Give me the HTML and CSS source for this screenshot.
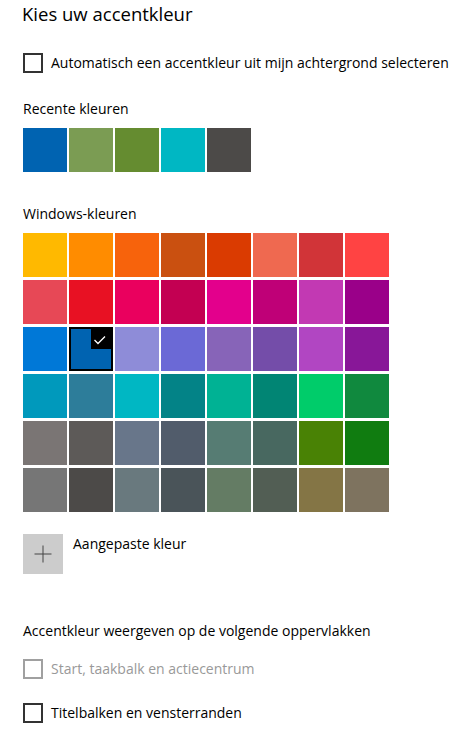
FILE: index.html
```html
<!DOCTYPE html>
<html lang="nl">
<head>
    <meta charset="UTF-8">
    <meta name="viewport" content="width=device-width, initial-scale=1.0">
    <title>Kies uw accentkleur</title>
    <link rel="stylesheet" href="styles.css">
</head>
<body>
    <h1 class="titel">Kies uw accentkleur</h1>

    <label class="vinkje vinkje-auto">
        <span class="vak"></span>
        <span>Automatisch een accentkleur uit mijn achtergrond selecteren</span>
    </label>

    <h2 class="kop kop-recent">Recente kleuren</h2>
    <div class="recent">
        <div class="kleur" style="background:#0063b1"></div>
        <div class="kleur" style="background:#7b9c53"></div>
        <div class="kleur" style="background:#658c30"></div>
        <div class="kleur" style="background:#00b7c3"></div>
        <div class="kleur" style="background:#4c4a48"></div>
    </div>

    <h2 class="kop kop-windows">Windows-kleuren</h2>
    <div class="raster">
        <!-- rij 1 -->
        <div class="kleur" style="background:#ffb900"></div>
        <div class="kleur" style="background:#ff8c00"></div>
        <div class="kleur" style="background:#f7630c"></div>
        <div class="kleur" style="background:#ca5010"></div>
        <div class="kleur" style="background:#da3b01"></div>
        <div class="kleur" style="background:#ef6950"></div>
        <div class="kleur" style="background:#d13438"></div>
        <div class="kleur" style="background:#ff4343"></div>
        <!-- rij 2 -->
        <div class="kleur" style="background:#e74856"></div>
        <div class="kleur" style="background:#e81123"></div>
        <div class="kleur" style="background:#ea005e"></div>
        <div class="kleur" style="background:#c30052"></div>
        <div class="kleur" style="background:#e3008c"></div>
        <div class="kleur" style="background:#bf0077"></div>
        <div class="kleur" style="background:#c239b3"></div>
        <div class="kleur" style="background:#9a0089"></div>
        <!-- rij 3 -->
        <div class="kleur" style="background:#0078d7"></div>
        <div class="kleur gekozen" style="background:#0063b1">
            <span class="hoek">
                <svg width="20" height="20" viewBox="0 0 20 20">
                    <path d="M3.5 11 L7 14.5 L14 7.5" fill="none" stroke="#fff" stroke-width="1.3"/>
                </svg>
            </span>
        </div>
        <div class="kleur" style="background:#8e8cd8"></div>
        <div class="kleur" style="background:#6b69d6"></div>
        <div class="kleur" style="background:#8764b8"></div>
        <div class="kleur" style="background:#744da9"></div>
        <div class="kleur" style="background:#b146c2"></div>
        <div class="kleur" style="background:#881798"></div>
        <!-- rij 4 -->
        <div class="kleur" style="background:#0099bc"></div>
        <div class="kleur" style="background:#2d7d9a"></div>
        <div class="kleur" style="background:#00b7c3"></div>
        <div class="kleur" style="background:#038387"></div>
        <div class="kleur" style="background:#00b294"></div>
        <div class="kleur" style="background:#018574"></div>
        <div class="kleur" style="background:#00cc6a"></div>
        <div class="kleur" style="background:#10893e"></div>
        <!-- rij 5 -->
        <div class="kleur" style="background:#7a7574"></div>
        <div class="kleur" style="background:#5d5a58"></div>
        <div class="kleur" style="background:#68768a"></div>
        <div class="kleur" style="background:#515c6b"></div>
        <div class="kleur" style="background:#567c73"></div>
        <div class="kleur" style="background:#486860"></div>
        <div class="kleur" style="background:#498205"></div>
        <div class="kleur" style="background:#107c10"></div>
        <!-- rij 6 -->
        <div class="kleur" style="background:#767676"></div>
        <div class="kleur" style="background:#4c4a48"></div>
        <div class="kleur" style="background:#69797e"></div>
        <div class="kleur" style="background:#4a5459"></div>
        <div class="kleur" style="background:#647c64"></div>
        <div class="kleur" style="background:#525e54"></div>
        <div class="kleur" style="background:#847545"></div>
        <div class="kleur" style="background:#7e735f"></div>
    </div>

    <div class="aangepast">
        <button class="plus" type="button">
            <svg width="18" height="18" viewBox="0 0 18 18">
                <path d="M9 0.5 V17.5 M0.5 9 H17.5" stroke="#444" stroke-width="1"/>
            </svg>
        </button>
        <span>Aangepaste kleur</span>
    </div>

    <h2 class="kop kop-oppervlak">Accentkleur weergeven op de volgende oppervlakken</h2>

    <label class="vinkje uit">
        <span class="vak"></span>
        <span>Start, taakbalk en actiecentrum</span>
    </label>

    <label class="vinkje vinkje-titel">
        <span class="vak"></span>
        <span>Titelbalken en vensterranden</span>
    </label>
</body>
</html>
```

FILE: styles.css
```css
/* Basis */
body {
    margin: 0;
    padding: 0 0 0 23px;
    background: #fff;
    color: #000;
    font-family: "Segoe UI", "Open Sans", sans-serif;
    font-size: 14px;
    line-height: 20px;
}

.titel {
    margin: 0 0 25px -1px;
    font-size: 18.5px;
    font-weight: 400;
    line-height: 28px;
}

.kop {
    margin: 0;
    font-size: 14px;
    font-weight: 400;
}

.kop-recent { margin-top: 26px; }
.kop-windows { margin-top: 32px; }
.kop-oppervlak { margin-top: 47px; }

/* Selectievakjes */
.vinkje {
    display: flex;
    align-items: center;
    gap: 8px;
    height: 20px;
}

.vak {
    width: 20px;
    height: 20px;
    box-sizing: border-box;
    border: 2px solid #333;
}

.vinkje.uit {
    margin-top: 18px;
    color: #999;
}

.vinkje.uit .vak {
    border-color: #a0a0a0;
}

.vinkje-titel {
    margin-top: 24px;
}

/* Kleurvakken */
.recent {
    display: flex;
    gap: 2px;
    margin-top: 9px;
}

.kleur {
    width: 44px;
    height: 44px;
}

.raster {
    display: grid;
    grid-template-columns: repeat(8, 44px);
    column-gap: 2px;
    row-gap: 3px;
    margin-top: 9px;
}

.gekozen {
    position: relative;
    box-sizing: border-box;
    border: 2px solid #000;
}

.hoek {
    position: absolute;
    top: 0;
    right: 0;
    width: 20px;
    height: 20px;
    background: #000;
}

.hoek svg {
    display: block;
}

/* Aangepaste kleur */
.aangepast {
    display: flex;
    align-items: flex-start;
    gap: 10px;
    margin-top: 22px;
}

.plus {
    width: 40px;
    height: 40px;
    padding: 0;
    border: 0;
    background: #ccc;
    display: flex;
    align-items: center;
    justify-content: center;
}

.plus svg {
    display: block;
}
```
